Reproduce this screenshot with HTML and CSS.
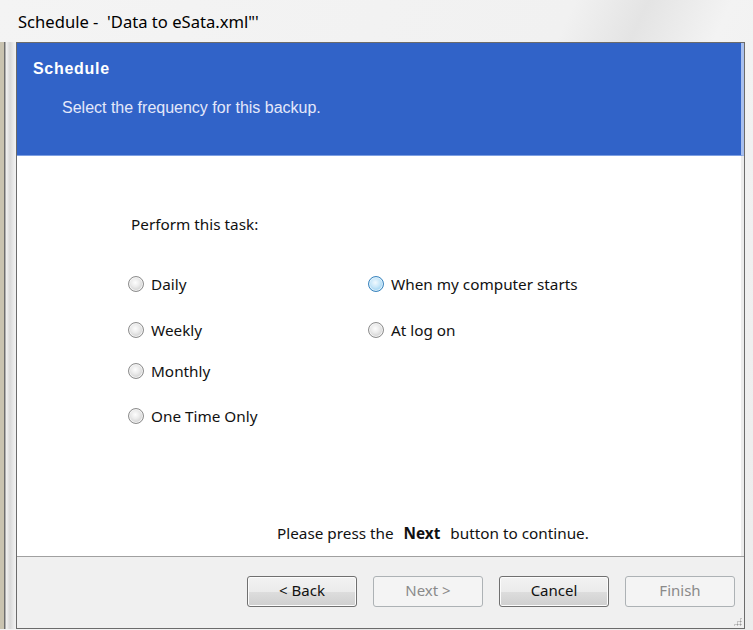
FILE: index.html
```html
<!DOCTYPE html>
<html lang="en">
<head>
    <meta charset="UTF-8">
    <title>Schedule - 'Data to eSata.xml"'</title>
    <link rel="stylesheet" href="styles.css">
</head>
<body>
    <div class="window">
        <div class="titlebar">Schedule -&nbsp; 'Data to eSata.xml"'</div>
        <div class="frame-row">
            <div class="frame-left"></div>
            <div class="client">
                <div class="wizard-header">
                    <div class="header-title">Schedule</div>
                    <div class="header-sub">Select the frequency for this backup.</div>
                </div>
                <div class="wizard-body">
                    <p class="task-label">Perform this task:</p>
                    <div class="options">
                        <label class="option"><span class="radio"></span>Daily</label>
                        <label class="option"><span class="radio radio-hot"></span>When my computer starts</label>
                        <label class="option"><span class="radio"></span>Weekly</label>
                        <label class="option"><span class="radio"></span>At log on</label>
                        <label class="option"><span class="radio"></span>Monthly</label>
                        <span></span>
                        <label class="option"><span class="radio"></span>One Time Only</label>
                    </div>
                    <p class="hint">Please press the <b>Next</b> button to continue.</p>
                </div>
                <div class="wizard-footer">
                    <button class="btn">&lt; Back</button>
                    <button class="btn" disabled>Next &gt;</button>
                    <button class="btn">Cancel</button>
                    <button class="btn" disabled>Finish</button>
                    <span class="grip"></span>
                </div>
            </div>
        </div>
    </div>
</body>
</html>
```

FILE: styles.css
```css
body {
    margin: 0;
    width: 753px;
    height: 630px;
    overflow: hidden;
    font-family: 'Noto Sans', 'Liberation Sans', sans-serif;
    background: #e9eaeb;
}
.window {
    display: flex;
    flex-direction: column;
    height: 630px;
    background: linear-gradient(115deg, #f4f4f4 0%, #f1f1f1 55%, #e4e4e4 62%, #f3f3f3 70%, #ececec 100%);
}
.titlebar {
    height: 42px;
    display: flex;
    align-items: center;
    padding-left: 18px;
    font-size: 16.6px;
    color: #000;
    white-space: pre;
}
.frame-row {
    display: flex;
    flex: 1;
    padding: 0 8px 1px 0;
}
.frame-left {
    width: 16px;
    background: linear-gradient(90deg, #c9c3b0 0, #c9c3b0 4px, #6e6e6e 4px, #6e6e6e 5px, #f2f2f2 6px, #d8d8d8 10px, #f0f0f0 15px);
}
.client {
    flex: 1;
    display: flex;
    flex-direction: column;
    border: 1px solid #6b6b6b;
    background: #fff;
}
.wizard-header {
    height: 112px;
    background: #3163c8;
    border-bottom: 1px solid #7d9fe2;
    border-right: 3px solid #a8bfee;
    color: #fff;
}
.header-title {
    font-family: 'Liberation Sans', sans-serif;
    font-weight: bold;
    font-size: 16px;
    letter-spacing: 0.7px;
    padding: 16px 0 0 16px;
    line-height: 19px;
}
.header-sub {
    font-family: 'Liberation Sans', sans-serif;
    font-size: 16px;
    color: #e4e8fa;
    padding: 20px 0 0 45px;
    line-height: 19px;
}
.wizard-body {
    flex: 1;
    display: flex;
    flex-direction: column;
    padding: 56px 0 11px 0;
    border-right: 3px solid #ececec;
    font-size: 15.3px;
    color: #111;
}
.task-label {
    margin: 0 0 36px 114px;
    line-height: 24px;
}
.options {
    display: grid;
    grid-template-columns: 240px auto;
    grid-template-rows: 46px 41px 45px 24px;
    margin-left: 111px;
}
.option {
    display: flex;
    align-items: center;
    height: 24px;
    gap: 7px;
}
.radio {
    width: 14px;
    height: 14px;
    border: 1px solid #8d8d8d;
    border-radius: 50%;
    background: radial-gradient(circle at 45% 40%, #fdfdfd 0, #ececec 35%, #cfcfcf 75%, #bcbcbc 100%);
    box-shadow: inset 0 0 0 1px #f4f4f4;
}
.radio-hot {
    border-color: #3b84bd;
    background: radial-gradient(circle at 45% 40%, #f1f9fe 0, #c9e7f9 40%, #94cdef 80%, #7bbde6 100%);
    box-shadow: inset 0 0 0 1px #dff1fc;
}
.hint {
    margin: auto 0 0 260px;
    line-height: 24px;
}
.hint b {
    padding: 0 6px;
}
.wizard-footer {
    position: relative;
    height: 72px;
    box-sizing: border-box;
    display: flex;
    justify-content: flex-end;
    align-items: flex-start;
    gap: 16px;
    padding: 19px 9px 0 0;
    background: #f0f0f0;
    border-top: 1px solid #a0a0a0;
}
.btn {
    width: 110px;
    height: 31px;
    font-family: 'Noto Sans', 'Liberation Sans', sans-serif;
    font-size: 15px;
    color: #111;
    border: 1px solid #707070;
    border-radius: 3px;
    background: linear-gradient(#f2f2f2 0, #ebebeb 50%, #dddddd 51%, #cfcfcf 100%);
    box-shadow: inset 0 0 0 1px #fcfcfc;
    padding: 0 0 4px 0;
}
.btn:disabled {
    color: #8a8a8a;
    border-color: #adb2b5;
    background: #f4f4f4;
    box-shadow: none;
}
.grip {
    position: absolute;
    right: 2px;
    bottom: 2px;
    width: 9px;
    height: 9px;
    background: radial-gradient(circle, #9a9a9a 0.8px, transparent 1.2px) 0 0 / 3px 3px;
    clip-path: polygon(100% 0, 100% 100%, 0 100%);
}
```
